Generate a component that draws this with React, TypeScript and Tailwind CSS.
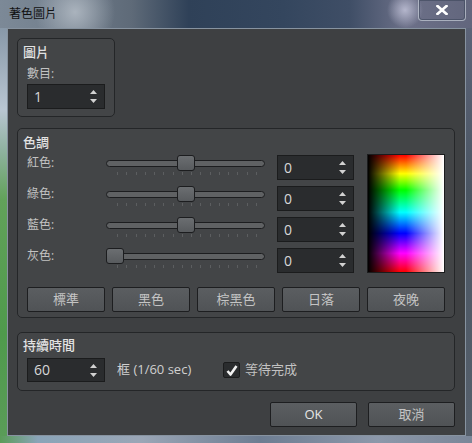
import React from 'react';

// Spin box with up/down arrows on the right
function SpinBox({ value, width = 'w-[77px]', height = 'h-[25px]' }: { value: string; width?: string; height?: string }) {
  return (
    <div className={`flex items-center justify-between ${width} ${height} bg-[#2a2c2e] border border-[#1b1c1d] pl-[6px] pr-[7px]`}>
      <span className="text-[14px] leading-none text-[#d8d8d8]">{value}</span>
      <div className="flex flex-col gap-[5px]">
        <svg width="7" height="4" viewBox="0 0 7 4">
          <path d="M3.5 0 L7 4 L0 4 Z" fill="#d2d2d2" />
        </svg>
        <svg width="7" height="4" viewBox="0 0 7 4">
          <path d="M0 0 L7 0 L3.5 4 Z" fill="#d2d2d2" />
        </svg>
      </div>
    </div>
  );
}

function Slider({ left }: { left: number }) {
  const ticks = Array.from({ length: 16 });
  return (
    <div className="relative w-[159px] h-[25px]">
      <div className="absolute left-0 right-0 top-[5px] h-[7px] rounded-full border border-[#1c1d1f] bg-[#5f6163]" />
      <div className="absolute left-[11px] w-[140px] top-[17px] h-[3px] flex justify-between">
        {ticks.map((_, i) => (
          <div key={i} className="w-px h-[3px] bg-[#5c5e60]" />
        ))}
      </div>
      <div
        className="absolute top-0 w-[18px] h-[16px] rounded-[3px] border border-[#1c1d1f] bg-[linear-gradient(to_bottom,#6b6e71,#585b5e)]"
        style={{ left }}
      />
    </div>
  );
}

function Btn({ label, className = '' }: { label: string; className?: string }) {
  return (
    <div
      className={`flex items-center justify-center h-[25px] rounded-[2px] border border-[#1d1e20] bg-[linear-gradient(to_bottom,#5b5e61,#505356)] text-[13px] text-[#c4c4c4] ${className}`}
    >
      {label}
    </div>
  );
}

const rows = [
  { label: '紅色:', pos: 71 },
  { label: '綠色:', pos: 71 },
  { label: '藍色:', pos: 71 },
  { label: '灰色:', pos: 0 },
];

export default function App() {
  return (
    <div className="w-[472px] h-[443px] flex flex-col overflow-hidden font-['Open_Sans','Noto_Sans_CJK_TC',sans-serif] bg-[#4a5666]">
      {/* Title bar */}
      <div className="h-[28px] flex items-start bg-[radial-gradient(circle_at_75px_12px,#aab3bd_0,transparent_40px),radial-gradient(circle_at_405px_10px,#b4b6cc_0,transparent_18px),linear-gradient(to_right,#7c8997_0%,#73808e_12%,#5e6a78_28%,#2f4158_40%,#34465e_60%,#3f4e66_74%,#6c7088_86%,#62667d_100%)]">
        <span className="pl-[9px] pt-[6px] text-[12px] leading-[16px] text-[#111]">著色圖片</span>
        <div className="ml-auto mr-[6px] w-[48px] h-[21px] flex items-center justify-center rounded-b-[4px] border border-t-0 border-[#c7cdd8]/70 shadow-[inset_0_0_0_1px_rgba(60,70,90,0.6)]">
          <svg width="12" height="10" viewBox="0 0 12 10">
            <path d="M1.5 1 L10.5 9 M10.5 1 L1.5 9" stroke="#fff" strokeWidth="2.6" strokeLinecap="square" />
          </svg>
        </div>
      </div>

      <div className="flex h-[408px]">
        {/* left frame */}
        <div className="w-[7px] bg-[linear-gradient(to_bottom,#8898a8_0%,#b9c6d2_20%,#8fb2a0_30%,#62a25a_42%,#4f9a4c_75%,#5a9c58_100%)]" />

        {/* Dialog body */}
        <div className="w-[459px] flex flex-col bg-[#3e4042] border border-[#8793a0] pl-[9px] pt-[9px] pr-[10px]">
          {/* 圖片 */}
          <div className="w-[98px] h-[79px] flex flex-col rounded-[5px] border border-[#242628] bg-[#434547] pl-[9px]">
            <div className="mt-[4px] -ml-[4px] h-[18px] leading-[18px] text-[13px] font-medium text-[#e2e2e2]">圖片</div>
            <div className="mt-[5px] h-[16px] leading-[16px] text-[12px] text-[#c2c2c2]">數目:</div>
            <div className="mt-[2px]">
              <SpinBox value="1" width="w-[78px]" />
            </div>
          </div>

          {/* 色調 */}
          <div className="mt-[11px] w-[438px] h-[190px] flex flex-col rounded-[5px] border border-[#242628] bg-[#434547] pl-[9px]">
            <div className="mt-[4px] -ml-[4px] h-[18px] leading-[18px] text-[13px] font-medium text-[#e2e2e2]">色調</div>
            <div className="mt-[4px] flex items-start">
              <div className="flex flex-col gap-[6px]">
                {rows.map((r) => (
                  <div key={r.label} className="flex items-start h-[25px]">
                    <div className="w-[79px] h-[16px] leading-[16px] text-[12px] text-[#c2c2c2]">{r.label}</div>
                    <Slider left={r.pos} />
                    <div className="ml-[12px]">
                      <SpinBox value="0" />
                    </div>
                  </div>
                ))}
              </div>
              <div className="ml-[13px] -mt-[1px] relative w-[78px] h-[119px] border border-[#1b1c1d] bg-[linear-gradient(to_bottom,#f00_0%,#ff0_16%,#0f0_30%,#0ff_49%,#00f_67%,#f0f_84%,#f00_100%)]">
                <div className="absolute inset-0 bg-[linear-gradient(to_right,#000_0%,rgba(0,0,0,0)_42%,rgba(255,255,255,0)_50%,#fff_100%)]" />
              </div>
            </div>
            <div className="mt-[14px] flex gap-[7px]">
              {['標準', '黑色', '棕黑色', '日落', '夜晚'].map((b) => (
                <Btn key={b} label={b} className="w-[78px]" />
              ))}
            </div>
          </div>

          {/* 持續時間 */}
          <div className="mt-[14px] w-[438px] h-[59px] flex flex-col rounded-[5px] border border-[#242628] bg-[#434547] pl-[9px]">
            <div className="mt-[3px] -ml-[4px] h-[18px] leading-[18px] text-[13px] font-medium text-[#e2e2e2]">持續時間</div>
            <div className="mt-[4px] flex items-center">
              <SpinBox value="60" width="w-[78px]" height="h-[24px]" />
              <span className="ml-[12px] w-[106px] text-[13px] text-[#d0d0d0]">框 (1/60 sec)</span>
              <div className="w-[17px] h-[16px] flex items-center justify-center rounded-[2px] border border-[#1b1c1d] bg-[#2a2c2e]">
                <svg width="12" height="11" viewBox="0 0 12 11">
                  <path d="M1.5 6 L4.5 9.5 L10.5 1" stroke="#f2f2f2" strokeWidth="2.6" fill="none" strokeLinejoin="round" />
                </svg>
              </div>
              <span className="ml-[5px] text-[13px] text-[#c2c2c2]">等待完成</span>
            </div>
          </div>

          {/* OK / Cancel */}
          <div className="mt-[11px] w-[438px] flex justify-end gap-[11px]">
            <Btn label="OK" className="w-[87px] h-[23px] text-[#e6e6e6]" />
            <Btn label="取消" className="w-[87px] h-[23px] text-[#b4b4b4]" />
          </div>
        </div>

        {/* right frame */}
        <div className="w-[6px] bg-[linear-gradient(to_bottom,#5c6478,#4a5562_40%,#56606c)]" />
      </div>

      {/* bottom frame */}
      <div className="h-[7px] bg-[linear-gradient(to_right,#5a9c58_0%,#8aa4b8_8%,#9aa6b6_30%,#6d7d92_55%,#8c98aa_80%,#7a8698_100%)]" />
    </div>
  );
}
